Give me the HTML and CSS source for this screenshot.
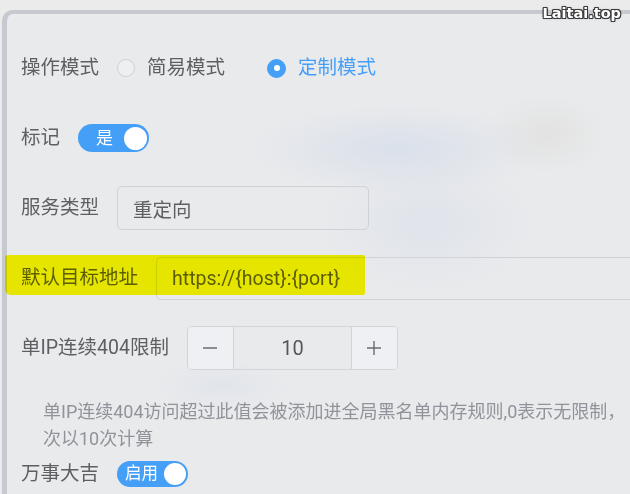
FILE: index.html
```html
<!DOCTYPE html>
<html lang="zh-CN">
<head>
    <meta charset="UTF-8">
    <meta name="viewport" content="width=device-width, initial-scale=1.0">
    <title>站点配置</title>
    <link rel="stylesheet" href="styles.css">
</head>
<body>
    <div class="watermark">Laitai.top</div>
    <div class="panel">
        <div class="row">
            <span class="label">操作模式</span>
            <div class="radios">
                <label class="radio"><span class="dot"></span>简易模式</label>
                <label class="radio is-checked"><span class="dot"></span>定制模式</label>
            </div>
        </div>
        <div class="row">
            <span class="label">标记</span>
            <span class="switch switch-short"><span class="switch-text">是</span><span class="knob"></span></span>
        </div>
        <div class="row">
            <span class="label">服务类型</span>
            <div class="input input-mid">重定向</div>
        </div>
        <div class="row row-marked">
            <span class="label">默认目标地址</span>
            <div class="input input-wide">https://{host}:{port}</div>
            <!-- highlighter stroke over the row -->
            <span class="marker"></span>
        </div>
        <div class="row">
            <span class="label">单IP连续404限制</span>
            <div class="stepper">
                <span class="step-btn">
                    <svg width="16" height="16" viewBox="0 0 16 16"><line x1="1" y1="8" x2="15" y2="8" stroke="#6a6c70" stroke-width="1.4"/></svg>
                </span>
                <span class="step-value">10</span>
                <span class="step-btn">
                    <svg width="16" height="16" viewBox="0 0 16 16"><line x1="1" y1="8" x2="15" y2="8" stroke="#6a6c70" stroke-width="1.4"/><line x1="8" y1="1" x2="8" y2="15" stroke="#6a6c70" stroke-width="1.4"/></svg>
                </span>
            </div>
        </div>
        <p class="help">单IP连续404访问超过此值会被添加进全局黑名单内存规则,0表示无限制，<br>次以10次计算</p>
        <div class="row row-last">
            <span class="label">万事大吉</span>
            <span class="switch switch-long"><span class="switch-text">启用</span><span class="knob"></span></span>
        </div>
    </div>
</body>
</html>
```

FILE: styles.css
```css
html, body {
    margin: 0;
    padding: 0;
}
body {
    width: 630px;
    height: 494px;
    overflow: hidden;
    position: relative;
    background: #ebebec;
    font-family: Roboto, "Noto Sans CJK SC", sans-serif;
}

.watermark {
    position: absolute;
    top: 5px;
    right: 9px;
    z-index: 5;
    font-family: "DejaVu Sans", sans-serif;
    font-weight: 700;
    font-size: 14.5px;
    color: #fff;
    text-shadow: 1px 0 0 #3b3b3b, -1px 0 0 #3b3b3b, 0 1px 0 #3b3b3b, 0 -1px 0 #3b3b3b,
        1px 1px 0 #3b3b3b, -1px -1px 0 #3b3b3b, 1px -1px 0 #3b3b3b, -1px 1px 0 #3b3b3b,
        0 0 3px #888;
}

/* the panel runs on past the right edge, so it has no right border */
.panel {
    box-sizing: border-box;
    width: 628px;
    min-height: 484px;
    margin: 10px 0 0 2px;
    padding: 32px 0 0 14px;
    border-top: 4px solid #c6c9d0;
    border-left: 5px solid #c6c9d0;
    border-top-left-radius: 11px;
    background:
        radial-gradient(ellipse 150px 45px at 390px 135px, rgba(214, 222, 234, 0.8), transparent),
        radial-gradient(ellipse 110px 70px at 420px 210px, rgba(218, 224, 234, 0.65), transparent),
        radial-gradient(ellipse 70px 26px at 215px 372px, rgba(218, 224, 234, 0.55), transparent),
        radial-gradient(ellipse 60px 40px at 540px 120px, rgba(224, 224, 222, 0.8), transparent),
        #e9eaec;
}

.row {
    position: relative;
    display: flex;
    align-items: center;
    gap: 18px;
    height: 44px;
    margin-bottom: 26px;
}
.row-last {
    margin-bottom: 0;
}

.label {
    font-size: 19.5px;
    line-height: 1;
    color: #5d5f63;
    white-space: nowrap;
}

.radios {
    display: flex;
    align-items: center;
    gap: 42px;
}
.radio {
    display: inline-flex;
    align-items: center;
    gap: 12px;
    font-size: 19.5px;
    line-height: 1;
    color: #5d5f63;
}
.dot {
    position: relative;
    box-sizing: border-box;
    width: 18px;
    height: 18px;
    border: 1px solid #cfd1d6;
    border-radius: 50%;
    background: #eeeff1;
}
.radio.is-checked {
    color: #469ff7;
}
.radio.is-checked .dot {
    width: 19px;
    height: 19px;
    background: #469ff7;
    border-color: #469ff7;
}
.radio.is-checked .dot::after {
    content: "";
    position: absolute;
    left: 50%;
    top: 50%;
    width: 6px;
    height: 6px;
    margin: -3px 0 0 -3px;
    border-radius: 50%;
    background: #fff;
}

.switch {
    box-sizing: border-box;
    display: inline-flex;
    align-items: center;
    width: 71px;
    background: #469ff7;
    color: #fff;
}
.switch-short {
    height: 28px;
    border-radius: 14px;
    padding: 0 2px 0 18px;
    font-size: 17px;
}
.switch-long {
    height: 26px;
    border-radius: 13px;
    padding: 0 2px 0 8px;
    font-size: 16.5px;
}
.switch-text {
    line-height: 1;
}
.knob {
    margin-left: auto;
    width: 23px;
    height: 23px;
    border-radius: 50%;
    background: #fff;
}
.switch-long .knob {
    width: 22px;
    height: 22px;
}

.input {
    box-sizing: border-box;
    height: 44px;
    display: flex;
    align-items: center;
    padding-left: 15px;
    border: 1px solid #cfd2d7;
    border-radius: 5px;
    font-size: 19.5px;
    color: #5d5f63;
}
.input-mid {
    width: 252px;
}
.input-wide {
    flex: 1;
    height: 43px;
    border-right: 0;
    border-radius: 5px 0 0 5px;
}

.marker {
    position: absolute;
    left: -16px;
    top: -1px;
    width: 360px;
    height: 40px;
    border-radius: 3px 2px 2px 6px;
    background: #fbfa00;
    mix-blend-mode: multiply;
}

.stepper {
    box-sizing: border-box;
    display: flex;
    width: 211px;
    height: 44px;
    border: 1px solid #d2d4d9;
    border-radius: 5px;
    overflow: hidden;
}
.step-btn {
    width: 45px;
    display: flex;
    align-items: center;
    justify-content: center;
    background: #eff0f3;
}
.step-value {
    flex: 1;
    display: flex;
    align-items: center;
    justify-content: center;
    border-left: 1px solid #d2d4d9;
    border-right: 1px solid #d2d4d9;
    font-size: 20px;
    color: #55575b;
}

.help {
    margin: 0 0 0 22px;
    padding-top: 2px;
    font-size: 18px;
    line-height: 27px;
    color: #909399;
    white-space: nowrap;
}
```
